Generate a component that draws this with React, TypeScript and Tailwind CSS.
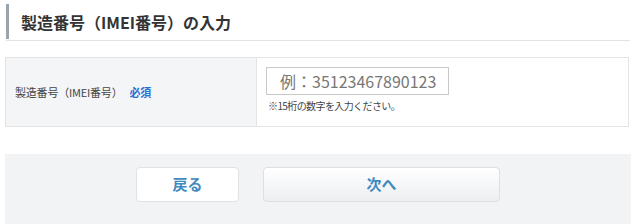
import React from 'react';

const App = () => {
  return (
    <div className="w-[640px] h-[224px] overflow-hidden bg-white font-['Noto_Sans_CJK_JP','Noto_Sans',sans-serif] text-[#333]">
      {/* 見出し */}
      <div className="ml-[6px] mr-[10px] pt-[4px] border-b border-[#e3e3e3]">
        <div className="h-[35px] mb-[1px] border-l-[3px] border-[#9ba3ab] pl-[12px] flex items-center">
          <h2 className="text-[16px] font-bold text-[#333]">製造番号（IMEI番号）の入力</h2>
        </div>
      </div>

      {/* 入力テーブル */}
      <div className="ml-[5px] mr-[11px] mt-[16px] h-[70px] border border-[#e3e3e3] flex">
        <div className="w-[251px] bg-[#f4f5f7] border-r border-[#e3e3e3] flex items-center pl-[9px] text-[11px] tracking-[-0.2px]">
          <span className="text-[#444]">製造番号（IMEI番号）</span>
          <span className="ml-[7px] font-bold text-[#2a6fd6]">必須</span>
        </div>
        <div className="flex-1 pl-[9px] pt-[9px]">
          <div className="w-[183px] h-[28px] border border-[#c9c9c9] flex items-center pl-[13px] text-[16px] text-[#777] leading-none">
            例：35123467890123
          </div>
          <p className="mt-[3px] ml-[2px] text-[10px] tracking-[-0.6px] text-[#444]">※15桁の数字を入力ください。</p>
        </div>
      </div>

      {/* ボタン */}
      <div className="ml-[5px] mr-[9px] mt-[27px] h-[80px] bg-[#f2f3f5] pt-[13px] flex justify-center gap-[24px]">
        <button className="w-[103px] h-[35px] bg-white border border-[#e0e2e5] rounded-[4px] text-[15px] font-bold text-[#3f8bbf]">
          戻る
        </button>
        <button className="w-[237px] h-[35px] bg-gradient-to-b from-white to-[#eceef1] border border-[#dcdfe3] rounded-[4px] text-[15px] font-bold text-[#3f8bbf]">
          次へ
        </button>
      </div>
    </div>
  );
};

export default App;
